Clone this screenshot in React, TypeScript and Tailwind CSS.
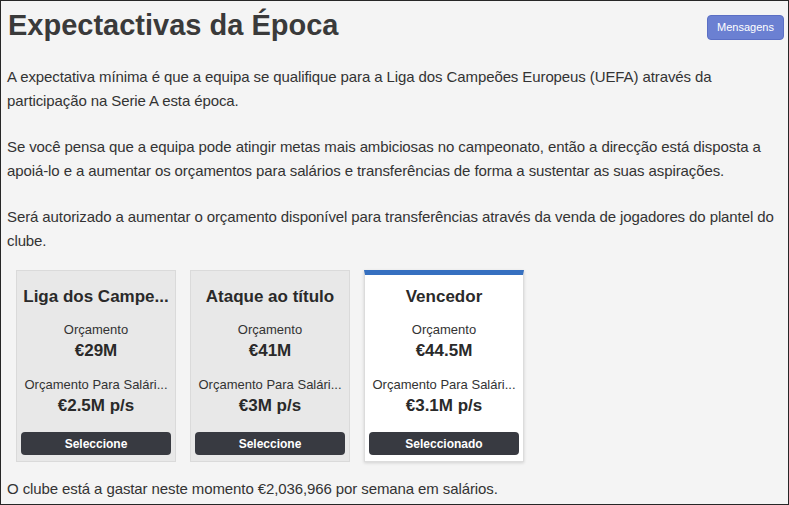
import React from "react";

type Card = { title: string; budget: string; wage: string; selected?: boolean };

const cards: Card[] = [
  { title: "Liga dos Campeões Europeus", budget: "€29M", wage: "€2.5M p/s" },
  { title: "Ataque ao título", budget: "€41M", wage: "€3M p/s" },
  { title: "Vencedor", budget: "€44.5M", wage: "€3.1M p/s", selected: true },
];

export default function App() {
  return (
    <div
      className="h-[505px] w-[789px] box-border border border-[#262626] bg-[#f4f4f4] text-[#333] overflow-hidden"
      style={{ fontFamily: '"Liberation Sans", Arial, sans-serif' }}
    >
      <div className="flex items-start justify-between pl-[7px] pr-[4px]">
        <h1 className="mt-[5px] text-[29px] leading-[38px] font-bold text-[#3a3a3a]">Expectactivas da Época</h1>
        <button className="mt-[14px] h-[25px] w-[77px] rounded-[4px] border border-[#5b6fc4] bg-[#6b80d2] text-[11px] text-white">
          Mensagens
        </button>
      </div>
      <div className="px-[6px] pt-[21px] text-[15px] leading-[24px] tracking-[-0.1px]">
        <p className="mb-[22px]">
          A expectativa mínima é que a equipa se qualifique para a Liga dos Campeões Europeus (UEFA) através da participação na Serie A esta época.
        </p>
        <p className="mb-[22px]">
          Se você pensa que a equipa pode atingir metas mais ambiciosas no campeonato, então a direcção está disposta a apoiá-lo e a aumentar os orçamentos para salários e transferências de forma a sustentar as suas aspirações.
        </p>
        <p>
          Será autorizado a aumentar o orçamento disponível para transferências através da venda de jogadores do plantel do clube.
        </p>
      </div>
      <div className="flex gap-[14px] pl-[15px] pt-[17px]">
        {cards.map((c) => (
          <div
            key={c.title}
            className={
              c.selected
                ? "flex w-[160px] h-[192px] flex-col items-center border border-[#dcdcdc] border-t-[5px] border-t-[#3670c0] bg-white px-[5px] shadow-[0_1px_3px_rgba(0,0,0,0.15)]"
                : "flex w-[160px] h-[192px] flex-col items-center border border-[#dadada] bg-[#e8e8e8] px-[4px] pt-[4px]"
            }
          >
            <div className="mt-[11px] w-full truncate text-center text-[17px] leading-[22px] font-bold text-[#2a2a2a]">
              {c.title.length > 16 ? "Liga dos Campe..." : c.title}
            </div>
            <div className="mt-[14px] text-[13px] leading-[16px]">Orçamento</div>
            <div className="mt-[2px] text-[17px] leading-[22px] font-bold text-[#2a2a2a]">{c.budget}</div>
            <div className="mt-[15px] w-full text-center text-[13px] leading-[16px] whitespace-nowrap">Orçamento Para Salári...</div>
            <div className="mt-[2px] text-[17px] leading-[22px] font-bold text-[#2a2a2a]">{c.wage}</div>
            <button className="mt-[15px] h-[23px] w-[150px] shrink-0 rounded-[4px] bg-[#383a41] text-[12px] font-bold text-white">
              {c.selected ? "Seleccionado" : "Seleccione"}
            </button>
          </div>
        ))}
      </div>
      <p className="px-[6px] pt-[15px] text-[15px] leading-[24px] tracking-[-0.1px]">
        O clube está a gastar neste momento €2,036,966 por semana em salários.
      </p>
    </div>
  );
}
